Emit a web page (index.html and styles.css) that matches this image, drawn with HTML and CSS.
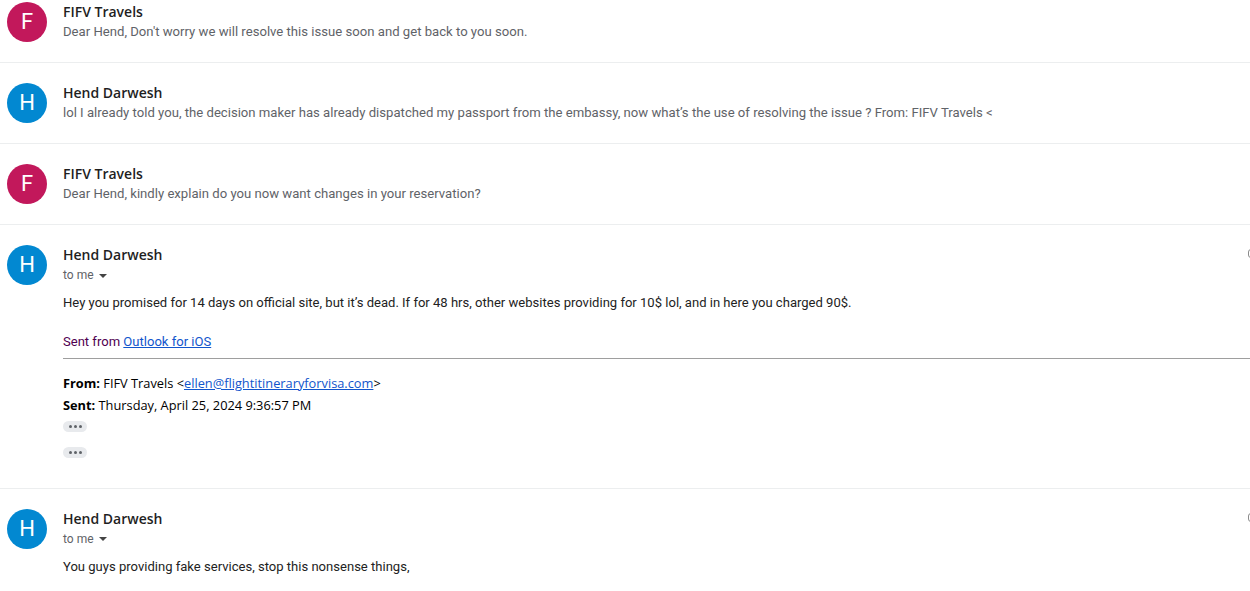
FILE: index.html
```html
<!DOCTYPE html>
<html>
<head>
<meta charset="utf-8">
<link rel="stylesheet" href="styles.css">
</head>
<body>
<div class="thread">
  <div class="msg first">
    <div class="avatar pink">F</div>
    <div class="main">
      <div class="name">FIFV Travels</div>
      <div class="snippet">Dear Hend, Don't worry we will resolve this issue soon and get back to you soon.</div>
    </div>
  </div>
  <div class="msg">
    <div class="avatar blue">H</div>
    <div class="main">
      <div class="name">Hend Darwesh</div>
      <div class="snippet">lol I already told you, the decision maker has already dispatched my passport from the embassy, now what’s the use of resolving the issue ? From: FIFV Travels &lt;</div>
    </div>
  </div>
  <div class="msg">
    <div class="avatar pink">F</div>
    <div class="main">
      <div class="name">FIFV Travels</div>
      <div class="snippet">Dear Hend, kindly explain do you now want changes in your reservation?</div>
    </div>
  </div>
  <div class="msg expanded">
    <div class="avatar blue">H</div>
    <div class="main">
      <div class="head">
        <div class="who">
          <div class="name">Hend Darwesh</div>
          <div class="tome">to me <span class="caret"></span></div>
        </div>
        <div class="tools"><span class="tool"></span></div>
      </div>
      <div class="body">
        <div>Hey you promised for 14 days on official site, but it’s dead. If for 48 hrs, other websites providing for 10$ lol, and in here you charged 90$.</div>
        <div class="blank"></div>
        <div class="sent-from">Sent from <a href="#">Outlook for iOS</a></div>
        <div class="rule"></div>
        <div class="quote">
          <div><b>From:</b> FIFV Travels &lt;<a href="#">ellen@flightitineraryforvisa.com</a>&gt;</div>
          <div><b>Sent:</b> Thursday, April 25, 2024 9:36:57 PM</div>
        </div>
        <div class="pill"><i></i><i></i><i></i></div>
        <div class="pill second"><i></i><i></i><i></i></div>
      </div>
    </div>
  </div>
  <div class="msg expanded last">
    <div class="avatar blue">H</div>
    <div class="main">
      <div class="head">
        <div class="who">
          <div class="name">Hend Darwesh</div>
          <div class="tome">to me <span class="caret"></span></div>
        </div>
        <div class="tools"><span class="tool"></span></div>
      </div>
      <div class="body">
        <div>You guys providing fake services, stop this nonsense things,</div>
      </div>
    </div>
  </div>
</div>
</body>
</html>
```
FILE: styles.css
```css
html, body {
  margin: 0;
  padding: 0;
  background: #fff;
  overflow: hidden;
}
body {
  width: 1250px;
  height: 591px;
  font-family: Roboto, "Liberation Sans", Arial, sans-serif;
}
.thread {
  width: 1270px;
}
.msg {
  display: flex;
  align-items: flex-start;
  padding: 20px 0 20px 7px;
  border-bottom: 1px solid #eceeef;
}
.msg.first {
  padding-top: 2px;
}
.msg.last {
  border-bottom: none;
}
.avatar {
  flex: 0 0 40px;
  width: 40px;
  height: 40px;
  border-radius: 50%;
  color: #fff;
  font-size: 22px;
  line-height: 40px;
  text-align: center;
  margin-right: 16px;
}
.avatar.pink { background: #c2185b; }
.avatar.blue { background: #0288d1; }
.main {
  flex: 1;
  min-width: 0;
}
.name {
  font-family: "Open Sans", Roboto, sans-serif;
  font-size: 14px;
  font-weight: 600;
  line-height: 20px;
  color: #1f1f1f;
}
.snippet {
  font-size: 13.13px;
  line-height: 20px;
  color: #5f6368;
  white-space: nowrap;
}
.head {
  display: flex;
  justify-content: space-between;
  align-items: flex-start;
}
.tome {
  font-size: 12px;
  line-height: 20px;
  color: #5f6368;
  display: flex;
  align-items: center;
  gap: 5px;
}
.caret {
  width: 0;
  height: 0;
  border-left: 4px solid transparent;
  border-right: 4px solid transparent;
  border-top: 4px solid #444;
  margin-top: 1px;
}
.tools {
  width: 22px;
  height: 20px;
  padding-top: 4px;
}
.tool {
  display: block;
  width: 5px;
  height: 7px;
  border: 1.5px solid #8a8a8a;
  border-radius: 3px;
}
.body {
  margin-top: 8px;
  font-size: 13.05px;
  line-height: 19.5px;
  color: #222;
}
.blank {
  height: 19.5px;
}
.sent-from {
  color: #500050;
}
.body a {
  color: #1155cc;
  text-decoration: underline;
}
.rule {
  margin-top: 6px;
  border-top: 1.5px solid #9e9e9e;
}
.quote {
  margin-top: 13px;
  font-family: "Open Sans", "Noto Sans", sans-serif;
  font-size: 12.8px;
  line-height: 22px;
  color: #000;
}
.quote b {
  font-weight: 700;
}
.pill {
  margin-top: 5px;
  width: 24px;
  height: 11px;
  border-radius: 6px;
  background: #e8eaed;
  display: flex;
  align-items: center;
  justify-content: center;
  gap: 2px;
}
.pill.second {
  margin-top: 15px;
  margin-bottom: 10px;
}
.pill i {
  width: 3px;
  height: 3px;
  border-radius: 50%;
  background: #5f6368;
}
```
